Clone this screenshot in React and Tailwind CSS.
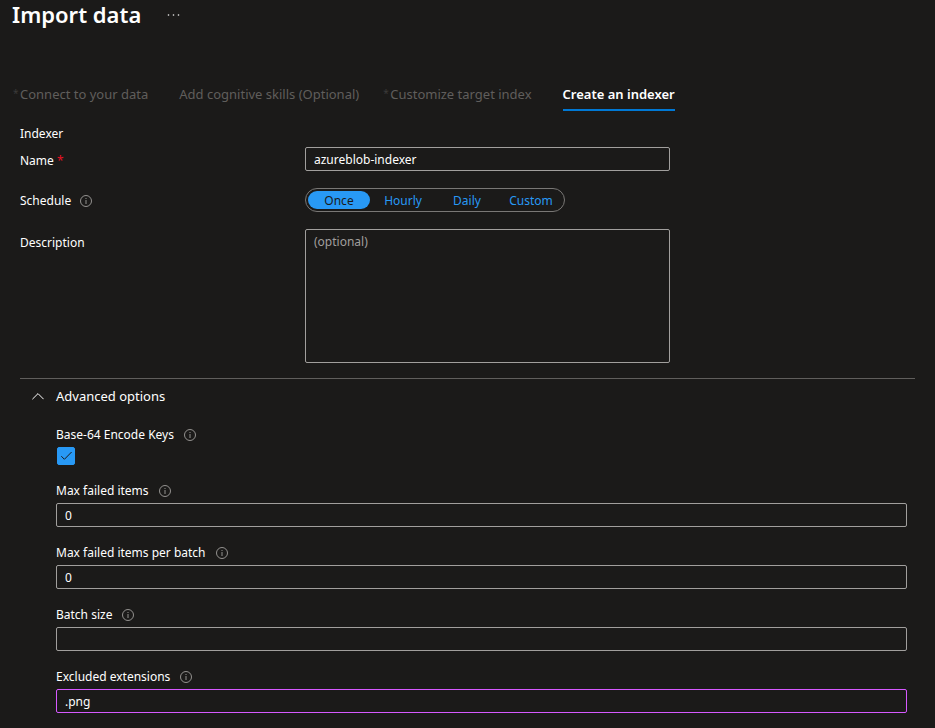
import { useState } from 'react'

const TABS = [
  { label: 'Connect to your data', required: true },
  { label: 'Add cognitive skills (Optional)' },
  { label: 'Customize target index', required: true },
  { label: 'Create an indexer', active: true },
]

const SCHEDULES = ['Once', 'Hourly', 'Daily', 'Custom']

export default function App() {
  const [name, setName] = useState('azureblob-indexer')
  const [schedule, setSchedule] = useState('Once')
  const [description, setDescription] = useState('')
  const [open, setOpen] = useState(true)
  const [encodeKeys, setEncodeKeys] = useState(true)
  const [maxFailed, setMaxFailed] = useState('0')
  const [maxFailedBatch, setMaxFailedBatch] = useState('0')
  const [batchSize, setBatchSize] = useState('')
  const [excluded, setExcluded] = useState('.png')

  return (
    <div className="min-h-screen bg-[#1b1a19] pb-3 font-['Noto_Sans','Open_Sans',sans-serif] text-[12px] leading-5 text-white">
      <header className="flex items-center gap-[26px] pl-3">
        <h1 className="text-[22px] leading-7 font-semibold">Import data</h1>
        <button aria-label="More actions" className="text-[#f3f2f1]">
          <svg width="13" height="4" viewBox="0 0 13 4" fill="currentColor">
            <circle cx="1.5" cy="3" r="0.8" />
            <circle cx="6.5" cy="3" r="0.8" />
            <circle cx="11.5" cy="3" r="0.8" />
          </svg>
        </button>
      </header>

      <nav className="mt-14 flex gap-[31px] px-5 text-[13px]">
        {TABS.map(t => <Tab key={t.label} {...t} />)}
      </nav>

      <main className="px-5 pt-[13px]">
        <h2>Indexer</h2>

        <div className="mt-[3px] space-y-[17px]">
          <div className="flex">
            <label htmlFor="name" className="w-[285px] shrink-0 pt-1">
              Name <span className="text-[#e81123]">*</span>
            </label>
            <TextInput id="name" value={name} onChange={setName} className="max-w-[365px] border-[#a19f9d]" />
          </div>

          <div className="flex">
            <div className="flex w-[285px] shrink-0 items-center gap-[9px] pt-[2px]">
              <span id="schedule">Schedule</span>
              <InfoIcon />
            </div>
            <div
              role="group"
              aria-labelledby="schedule"
              className="grid h-6 grid-cols-4 gap-[2px] rounded-full border border-[#797775] p-[2px]"
            >
              {SCHEDULES.map(s => (
                <button
                  key={s}
                  onClick={() => setSchedule(s)}
                  aria-pressed={schedule === s}
                  className={`w-[62px] rounded-full pt-[2px] leading-4 ${
                    schedule === s ? 'bg-[#2899f5] text-[#1b1a19]' : 'text-[#2899f5]'
                  }`}
                >
                  {s}
                </button>
              ))}
            </div>
          </div>

          <div className="flex">
            <label htmlFor="description" className="w-[285px] shrink-0 pt-1">Description</label>
            <textarea
              id="description"
              placeholder="(optional)"
              value={description}
              onChange={e => setDescription(e.target.value)}
              className="h-[134px] w-full max-w-[365px] resize-none rounded-[2px] border border-[#a19f9d] px-2 py-[2px] placeholder:text-[#a19f9d] focus:outline-none"
            />
          </div>
        </div>

        <section className="mt-[15px] border-t border-[#605e5c] pt-[7px]">
          <button
            onClick={() => setOpen(!open)}
            aria-expanded={open}
            className="flex w-full items-center gap-3 pl-3 text-left text-[13px]"
          >
            <svg
              width="12"
              height="8"
              viewBox="0 0 12 8"
              fill="none"
              stroke="currentColor"
              className={open ? '' : 'rotate-180'}
            >
              <path d="M0.4 7.2 6 1.6l5.6 5.6" />
            </svg>
            Advanced options
          </button>

          {open && (
            <div className="mt-[18px] space-y-[15px] pr-2 pl-9">
              <Field id="encode-keys" label="Base-64 Encode Keys">
                <CheckBox id="encode-keys" checked={encodeKeys} onChange={setEncodeKeys} />
              </Field>
              <Field id="max-failed" label="Max failed items">
                <TextInput id="max-failed" value={maxFailed} onChange={setMaxFailed} className="border-[#a19f9d]" />
              </Field>
              <Field id="max-failed-batch" label="Max failed items per batch">
                <TextInput id="max-failed-batch" value={maxFailedBatch} onChange={setMaxFailedBatch} className="border-[#a19f9d]" />
              </Field>
              <Field id="batch-size" label="Batch size">
                <TextInput id="batch-size" value={batchSize} onChange={setBatchSize} className="border-[#a19f9d]" />
              </Field>
              <Field id="excluded" label="Excluded extensions">
                <TextInput id="excluded" value={excluded} onChange={setExcluded} className="border-[#d659ff]" />
              </Field>
            </div>
          )}
        </section>
      </main>
    </div>
  )
}

function Tab({ label, required, active }) {
  return (
    <button
      disabled={!active}
      className={`relative border-b-2 pb-[5px] whitespace-nowrap ${
        active ? 'border-[#0078d4] font-semibold text-white' : 'border-transparent text-[#605e5c]'
      }`}
    >
      {required && <span className="absolute -top-px -left-[7px] text-[10px] text-[#3b3a39]">*</span>}
      {label}
    </button>
  )
}

function Field({ id, label, children }) {
  return (
    <div>
      <div className="mb-px flex items-center gap-[10px] leading-[22px]">
        <label htmlFor={id}>{label}</label>
        <InfoIcon />
      </div>
      {children}
    </div>
  )
}

function TextInput({ id, value, onChange, className }) {
  return (
    <input
      id={id}
      type="text"
      value={value}
      onChange={e => onChange(e.target.value)}
      className={`h-6 w-full rounded-[2px] border px-2 focus:outline-none ${className}`}
    />
  )
}

function CheckBox({ id, checked, onChange }) {
  return (
    <div className="relative ml-px size-[18px]">
      <input
        id={id}
        type="checkbox"
        checked={checked}
        onChange={e => onChange(e.target.checked)}
        className="block size-[18px] appearance-none rounded-[2px] border border-[#a19f9d] checked:border-[#2899f5] checked:bg-[#2899f5]"
      />
      {checked && (
        <svg
          width="18"
          height="18"
          viewBox="0 0 18 18"
          fill="none"
          stroke="#1b1a19"
          className="pointer-events-none absolute inset-0"
        >
          <path d="M4.3 9.2 7.4 12.3 14.6 5" />
        </svg>
      )}
    </div>
  )
}

function InfoIcon() {
  return (
    <svg width="12" height="12" viewBox="0 0 12 12" fill="none" stroke="#a19f9d" className="shrink-0">
      <circle cx="6" cy="6" r="5.5" strokeWidth="0.9" />
      <path d="M6 5v4M6 3v1" strokeWidth="0.9" />
    </svg>
  )
}
